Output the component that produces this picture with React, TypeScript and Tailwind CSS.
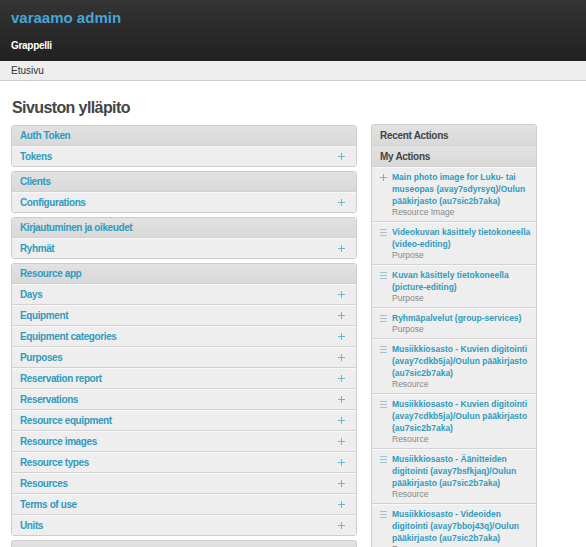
import React from "react";

const sans = { fontFamily: '"Liberation Sans", Arial, sans-serif' };

function Plus() {
  return (
    <svg width="9" height="9" viewBox="0 0 9 9" className="shrink-0">
      <path d="M4.5 1v7M1 4.5h7" stroke="#6bb5d6" strokeWidth="1" />
    </svg>
  );
}

function ListIcon() {
  return (
    <svg width="9" height="9" viewBox="0 0 9 9" className="shrink-0">
      <path d="M1 1.5h7M1 4.5h7M1 7.5h7" stroke="#9cc3d6" strokeWidth="1" />
    </svg>
  );
}

function Module({ title, rows }: { title: string; rows: string[] }) {
  return (
    <div className="mb-[4px] rounded-[3px] border border-[#cdcdcd] overflow-hidden">
      <div className="h-[19px] bg-linear-to-b from-[#e2e2e2] to-[#d9d9d9] px-[8px] flex items-center text-[10px] tracking-[-0.4px] font-bold text-[#309bbf]">
        {title}
      </div>
      {rows.map((r) => (
        <div
          key={r}
          className="h-[21px] border-t border-[#d2d2d2] bg-[#eeeeee] shadow-[inset_0_1px_0_#f8f8f8] pl-[8px] pr-[10px] flex items-center justify-between text-[10px] tracking-[-0.4px] font-bold text-[#309bbf]"
        >
          <span>{r}</span>
          <Plus />
        </div>
      ))}
    </div>
  );
}

const actions: { icon: "plus" | "list"; lines: string[]; meta: string }[] = [
  { icon: "plus", lines: ["Main photo image for Luku- tai", "museopas (avay7sdyrsyq)/Oulun", "pääkirjasto (au7sic2b7aka)"], meta: "Resource Image" },
  { icon: "list", lines: ["Videokuvan käsittely tietokoneella", "(video-editing)"], meta: "Purpose" },
  { icon: "list", lines: ["Kuvan käsittely tietokoneella", "(picture-editing)"], meta: "Purpose" },
  { icon: "list", lines: ["Ryhmäpalvelut (group-services)"], meta: "Purpose" },
  { icon: "list", lines: ["Musiikkiosasto - Kuvien digitointi", "(avay7cdkb5ja)/Oulun pääkirjasto", "(au7sic2b7aka)"], meta: "Resource" },
  { icon: "list", lines: ["Musiikkiosasto - Kuvien digitointi", "(avay7cdkb5ja)/Oulun pääkirjasto", "(au7sic2b7aka)"], meta: "Resource" },
  { icon: "list", lines: ["Musiikkiosasto - Äänitteiden", "digitointi (avay7bsfkjaq)/Oulun", "pääkirjasto (au7sic2b7aka)"], meta: "Resource" },
  { icon: "list", lines: ["Musiikkiosasto - Videoiden", "digitointi (avay7bboj43q)/Oulun", "pääkirjasto (au7sic2b7aka)"], meta: "Resource" },
];

export default function App() {
  return (
    <div className="w-[586px] h-[547px] overflow-hidden bg-white" style={sans}>
      <div className="h-[61px] bg-linear-to-b from-[#343434] to-[#212121] pl-[11px] pt-[7px]">
        <div className="text-[15px] leading-[22px] font-bold text-[#48a5d3]">varaamo admin</div>
        <div className="mt-[10px] text-[10px] leading-[14px] tracking-[-0.3px] font-bold text-white">Grappelli</div>
      </div>
      <div className="h-[20px] bg-[#eeeeee] border-b border-[#cccccc] pl-[11px] flex items-center text-[10px] text-[#333]">
        Etusivu
      </div>
      <div className="pl-[12px] pt-[16px] text-[16px] leading-[22px] tracking-[-0.6px] font-bold text-[#444]">
        Sivuston ylläpito
      </div>
      <div className="flex pl-[11px] pt-[5px] gap-[14px]">
        <div className="w-[346px] shrink-0 pt-[1px]">
          <Module title="Auth Token" rows={["Tokens"]} />
          <Module title="Clients" rows={["Configurations"]} />
          <Module title="Kirjautuminen ja oikeudet" rows={["Ryhmät"]} />
          <Module
            title="Resource app"
            rows={[
              "Days",
              "Equipment",
              "Equipment categories",
              "Purposes",
              "Reservation report",
              "Reservations",
              "Resource equipment",
              "Resource images",
              "Resource types",
              "Resources",
              "Terms of use",
              "Units",
            ]}
          />
          <div className="h-[20px] rounded-[3px] border border-[#cdcdcd] bg-linear-to-b from-[#e2e2e2] to-[#d9d9d9]" />
        </div>
        <div className="w-[166px] shrink-0">
          <div className="rounded-[3px] border border-[#cdcdcd] overflow-hidden">
            <div className="h-[20px] bg-linear-to-b from-[#e2e2e2] to-[#d9d9d9] px-[8px] flex items-center text-[10px] tracking-[-0.3px] font-bold text-[#444]">
              Recent Actions
            </div>
            <div className="h-[21px] border-t border-[#d2d2d2] bg-linear-to-b from-[#e2e2e2] to-[#d9d9d9] px-[8px] flex items-center text-[10px] tracking-[-0.3px] font-bold text-[#444]">
              My Actions
            </div>
            {actions.map((a, i) => (
              <div key={i} className="border-t border-[#d2d2d2] bg-[#eeeeee] shadow-[inset_0_1px_0_#f8f8f8] pt-[4px] pb-[3px] pl-[7px] pr-[4px] flex gap-[4px]">
                <div className="pt-[2px]">{a.icon === "plus" ? <Plus /> : <ListIcon />}</div>
                <div>
                  <div className="text-[8.5px] leading-[12px] font-bold text-[#309bbf]">
                    {a.lines.map((l, j) => (
                      <div key={j} className="whitespace-nowrap">{l}</div>
                    ))}
                  </div>
                  <div className="text-[8.5px] leading-[11px] text-[#888]">{a.meta}</div>
                </div>
              </div>
            ))}
          </div>
        </div>
      </div>
    </div>
  );
}
